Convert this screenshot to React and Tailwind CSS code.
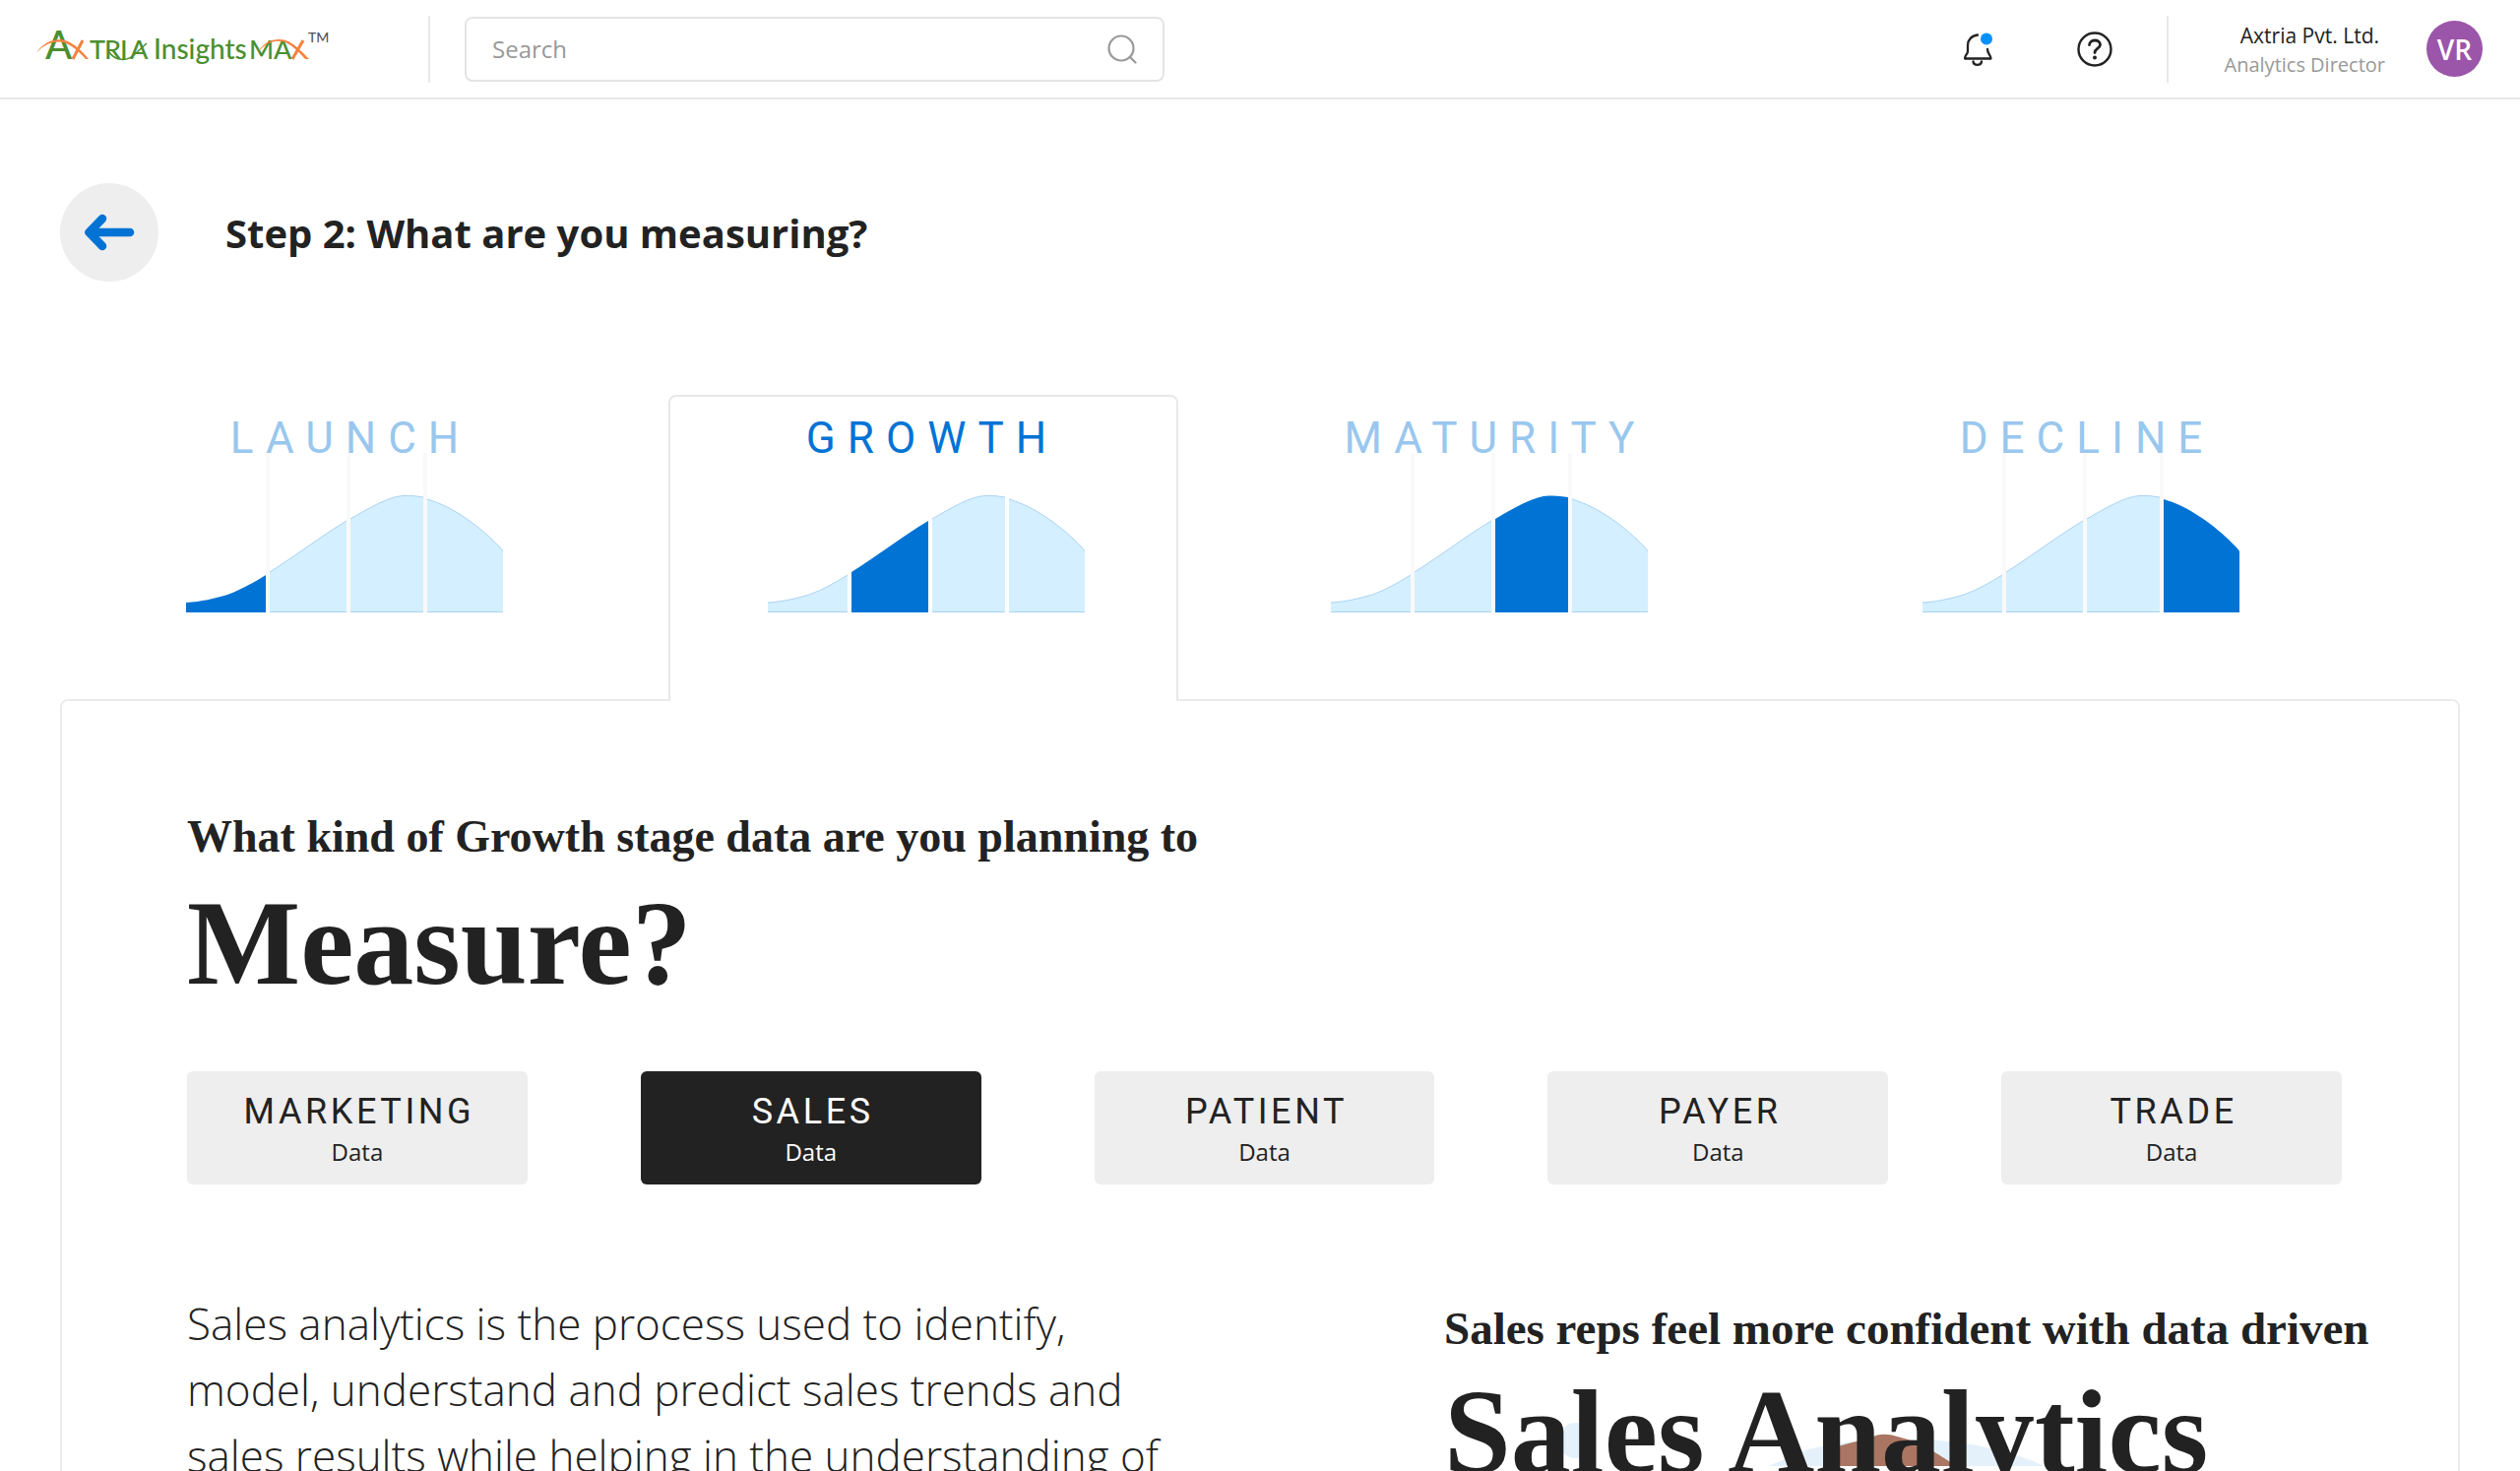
import React from "react";

const SEGMENTS = [
  "M0 152 C16 151 28 148 42 144 C56 139 68 132 81 124 V162 H0 Z",
  "M85 121 C112 104 138 84 163 69 V162 H85 Z",
  "M167 67 C186 56 206 44 221 43.5 Q231 43 241 45 V162 H167 Z",
  "M245 47 C273 55 301 77 318 95 Q321 98 322 100 V162 H245 Z",
];

const BASELINES = [
  [0, 81],
  [85, 163],
  [167, 241],
  [245, 322],
];

const STAGES = ["LAUNCH", "GROWTH", "MATURITY", "DECLINE"];
const SOURCES = ["MARKETING", "SALES", "PATIENT", "PAYER", "TRADE"];

function StageChart({ active, guides }) {
  return (
    <svg viewBox="0 0 322 162" className="block h-[162px] w-[322px]" aria-hidden="true">
      {guides &&
        [81, 163, 241].map((x) => <rect key={x} x={x} y="0" width="4" height="162" fill="#f9f9f9" />)}
      {SEGMENTS.map((d, i) => (
        <path key={i} d={d} fill={i === active ? "#0073d5" : "#d4efff"} />
      ))}
      {SEGMENTS.map((d, i) =>
        i === active ? null : (
          <path key={i} d={d.slice(0, d.indexOf(" V"))} fill="none" stroke="#a9d3f3" strokeWidth="1" />
        )
      )}
      {BASELINES.map(([a, b], i) => (
        <path key={i} d={`M${a} 161.5 H${b}`} stroke={i === active ? "#0073d5" : "#a9d3f3"} strokeWidth="1" />
      ))}
    </svg>
  );
}

function Logo() {
  return (
    <svg viewBox="0 0 300 44" className="block h-11 w-[300px] overflow-visible" role="img" aria-label="Axtria InsightsMAX">
      <g fontFamily="Lato, sans-serif" fontSize="27" fontWeight="500" fill="#4b8f31">
        <text x="9" y="32" fontSize="40">A</text>
        <text x="54" y="32">T</text>
        <text x="69" y="32">R</text>
        <text x="85" y="32">I</text>
        <text x="95" y="32">A</text>
        <text x="119" y="32" fontSize="28">Insights</text>
        <text x="216" y="32">M</text>
        <text x="241" y="32">A</text>
        <text x="276" y="15" fontSize="14" fill="#555555">TM</text>
      </g>
      <path d="M0 26 C8 13 22 10 32 14 C42 19 48 26 53 32 L50 32 C44 25 37 19 30 16 C20 12 8 16 0 26 Z" fill="#f5813f" />
      <path d="M47 13 L37 32" stroke="#f5813f" strokeWidth="3" fill="none" />
      <path d="M74 25 C80 34 92 35 100 27 L112 16" stroke="#4b8f31" strokeWidth="1.5" fill="none" />
      <path d="M225 25 C231 13 246 9 256 14 C265 19 271 26 277 32 L273 32 C267 25 261 19 253 15 C244 12 234 14 225 25 Z" fill="#f5813f" />
      <path d="M271 13 L260 32" stroke="#f5813f" strokeWidth="3" fill="none" />
    </svg>
  );
}

function Header() {
  return (
    <header className="flex h-[101px] shrink-0 items-center border-b-2 border-[#e8e8e8] pl-[37px] pr-[38px]">
      <a href="#home" className="w-[398px]">
        <Logo />
      </a>
      <div className="h-[68px] w-[2px] bg-[#e8e8e8]" />
      <label className="ml-[35px] flex h-[66px] w-[711px] items-center rounded-lg border-2 border-[#e4e4e4] pl-[26px] pr-[26px]">
        <span className="sr-only">Search</span>
        <input
          type="text"
          placeholder="Search"
          className="min-w-0 flex-1 bg-transparent text-2xl text-[#222222] outline-none placeholder:text-[#999999]"
        />
        <svg viewBox="0 0 30 30" className="size-[30px]" fill="none" stroke="#999999" strokeWidth="2.2" strokeLinecap="round" aria-hidden="true">
          <circle cx="14" cy="14" r="12.5" />
          <path d="M23 23 L28.5 28.5" />
        </svg>
      </label>
      <div className="ml-auto flex items-center">
        <button type="button" aria-label="Notifications" className="mr-[84px]">
          <svg viewBox="0 0 32 36" className="h-9 w-8" fill="none" stroke="#222222" strokeWidth="2.3" strokeLinecap="round" strokeLinejoin="round">
            <path d="M15 3.5 C9 4 5 8.500 5 14 V20 C5 23 2 24 2 27.500 H28.500 C28.500 24 25 23 25 18" />
            <path d="M10.500 30.500 C11 35 18.500 35 19 30.500" />
            <circle cx="24" cy="7.500" r="6" fill="#0091ff" stroke="none" />
          </svg>
        </button>
        <button type="button" aria-label="Help" className="mr-[55px]">
          <svg viewBox="0 0 36 36" className="size-9" fill="none" stroke="#222222" strokeWidth="2.4" strokeLinecap="round" strokeLinejoin="round">
            <circle cx="18" cy="18" r="16.500" />
            <path d="M12.500 13.500 C13 7.500 23.500 7.500 23.500 13.500 C23.500 17 18 17.500 18 21.500" strokeWidth="2.8" />
            <circle cx="18" cy="26.500" r="2" fill="#222222" stroke="none" />
          </svg>
        </button>
        <div className="h-[68px] w-[2px] bg-[#e8e8e8]" />
        <div className="ml-[57px] mr-[42px] flex flex-col items-end pt-[2px] leading-[29px]">
          <span className="pr-1.5 text-[21px] text-[#222222]">Axtria Pvt. Ltd.</span>
          <span className="text-[20px] text-[#999999]">Analytics Director</span>
        </div>
        <button type="button" className="size-[57px] rounded-full bg-[#9b55a9] text-[28px] font-semibold text-white">
          VR
        </button>
      </div>
    </header>
  );
}

export default function App() {
  return (
    <div className="flex h-screen flex-col overflow-hidden bg-white font-['Open_Sans',sans-serif] text-[#222222]">
      <Header />
      <main className="px-[61px] pt-[85px]">
        <div className="flex items-center gap-[68px]">
          <button type="button" aria-label="Back" className="flex size-[100px] items-center justify-center rounded-full bg-[#eeeeee]">
            <svg viewBox="0 0 52 38" className="h-[38px] w-[52px]" fill="none" stroke="#0073d5" strokeWidth="8.500" strokeLinecap="round" strokeLinejoin="round">
              <path d="M19 5 L5.500 19 L19 33" />
              <path d="M7 19 H47" />
            </svg>
          </button>
          <h1 className="pt-[2px] text-[40px] font-bold leading-[52px]">Step 2: What are you measuring?</h1>
        </div>

        <div role="tablist" className="relative z-10 -mb-[2px] ml-[30px] mr-[100px] mt-[115px] grid grid-cols-[518fr_518fr_492fr_570fr] gap-[70px]">
          {STAGES.map((name, i) => (
            <button
              key={name}
              type="button"
              role="tab"
              aria-selected={i === 1}
              className={
                "flex flex-col items-center rounded-t-lg border-2 border-b-0 pb-[90px] pt-[27px] " +
                (i === 1 ? "border-[#e8e8e8] bg-white pl-1.5 text-[#0073d5]" : "border-transparent text-[#99c7ee]")
              }
            >
              <span className="pl-3 font-[Roboto,sans-serif] text-[44px] leading-[30px] tracking-[12px]">{name}</span>
              <StageChart active={i} guides={i !== 1} />
            </button>
          ))}
        </div>

        <section className="rounded-lg border-2 border-[#ebebeb] pl-[127px] pr-[60px] pt-[112px]">
          <h2 className="font-['Liberation_Serif',serif] font-bold">
            <span className="block text-[46px] leading-[52px]">What kind of Growth stage data are you planning to</span>
            <span className="mt-[22px] block text-[122px] leading-[120px]">Measure?</span>
          </h2>

          <div className="mr-[58px] mt-[70px] grid grid-cols-5 gap-[115px]">
            {SOURCES.map((name, i) => (
              <button
                key={name}
                type="button"
                aria-pressed={i === 1}
                className={
                  "flex flex-col items-center gap-1 rounded-md pb-[17px] pt-5 " +
                  (i === 1 ? "bg-[#222222] text-white" : "bg-[#eeeeee] text-[#222222]")
                }
              >
                <span className="pl-1 font-[Roboto,sans-serif] text-4xl leading-[42px] tracking-widest">{name}</span>
                <span className="text-2xl leading-8">Data</span>
              </button>
            ))}
          </div>

          <div className="mt-[108px] grid grid-cols-[1277fr_970fr]">
            <p className="max-w-[1004px] text-[44px] font-light leading-[67px]">
              Sales analytics is the process used to identify, model, understand and predict sales trends and sales
              results while helping in the understanding of
            </p>
            <div className="relative pt-[12px]">
              <svg viewBox="0 0 650 60" className="absolute left-0 top-[118px] h-[60px] w-[650px]" aria-hidden="true">
                <circle cx="134" cy="34" r="18" fill="#e4f1fb" />
                <path d="M330 60 L366 44 Q420 30 498 33.500 Q560 38 610 60 Z" fill="#e4f1fb" />
                <path d="M395 60 L400 40 Q430 32 440 28.500 Q450 26 464 31 Q486 36 520 60 Z" fill="#aa7562" />
              </svg>
              <h2 className="relative font-['Liberation_Serif',serif] font-bold">
                <span className="block whitespace-nowrap text-[47px] leading-[52px]">
                  Sales reps feel more confident with data driven
                </span>
                <span className="mt-5 block text-[122px] leading-[120px]">Sales Analytics</span>
              </h2>
            </div>
          </div>
        </section>
      </main>
    </div>
  );
}
